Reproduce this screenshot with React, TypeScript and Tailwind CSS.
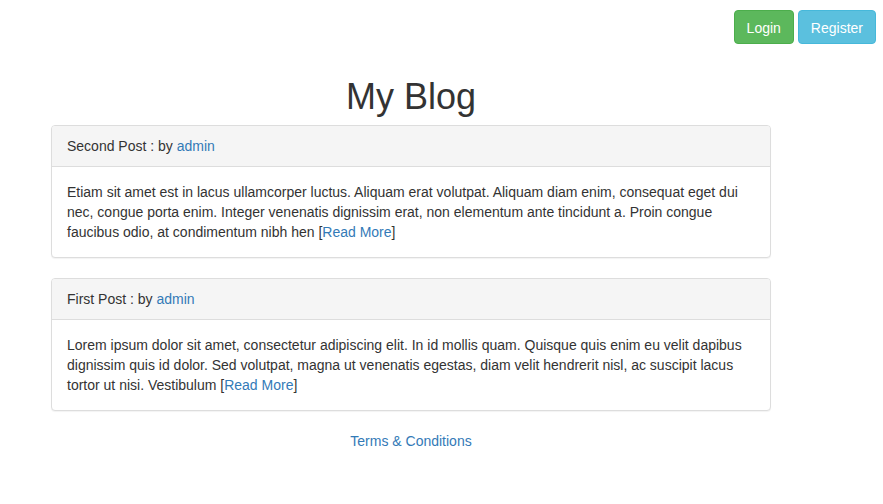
const POSTS = [
  {
    title: "Second Post",
    author: "admin",
    body: "Etiam sit amet est in lacus ullamcorper luctus. Aliquam erat volutpat. Aliquam diam enim, consequat eget dui nec, congue porta enim. Integer venenatis dignissim erat, non elementum ante tincidunt a. Proin congue faucibus odio, at condimentum nibh hen",
  },
  {
    title: "First Post",
    author: "admin",
    body: "Lorem ipsum dolor sit amet, consectetur adipiscing elit. In id mollis quam. Quisque quis enim eu velit dapibus dignissim quis id dolor. Sed volutpat, magna ut venenatis egestas, diam velit hendrerit nisl, ac suscipit lacus tortor ut nisi. Vestibulum",
  },
];

export default function App() {
  return (
    <div className="min-h-[504px] bg-white font-['Liberation_Sans',Arial,sans-serif] text-[14px] leading-[20px] text-[#333]">
      {/* top-right auth buttons */}
      <div className="flex justify-end gap-[4px] pr-[7px] pt-[10px]">
        <a className="rounded-[4px] border border-[#4cae4c] bg-[#5cb85c] px-[12px] pb-[5px] pt-[7px] text-white">
          Login
        </a>
        <a className="rounded-[4px] border border-[#46b8da] bg-[#5bc0de] px-[12px] pb-[5px] pt-[7px] text-white">
          Register
        </a>
      </div>

      <div className="ml-[51px] w-[720px]">
        <h1 className="mb-[8px] mt-[33px] text-center text-[36px] font-normal leading-[39.6px]">
          My Blog
        </h1>

        {POSTS.map((p) => (
          <div
            key={p.title}
            className="mb-[20px] rounded-[4px] border border-[#ddd] bg-white shadow-[0_1px_1px_rgba(0,0,0,0.05)]"
          >
            <div className="rounded-t-[3px] border-b border-[#ddd] bg-[#f5f5f5] px-[15px] py-[10px]">
              {p.title} : by <a className="text-[#337ab7]">{p.author}</a>
            </div>
            <div className="p-[15px]">
              {p.body} [<a className="text-[#337ab7]">Read More</a>]
            </div>
          </div>
        ))}

        <div className="text-center">
          <a className="text-[#337ab7]">Terms &amp; Conditions</a>
        </div>
      </div>
    </div>
  );
}
